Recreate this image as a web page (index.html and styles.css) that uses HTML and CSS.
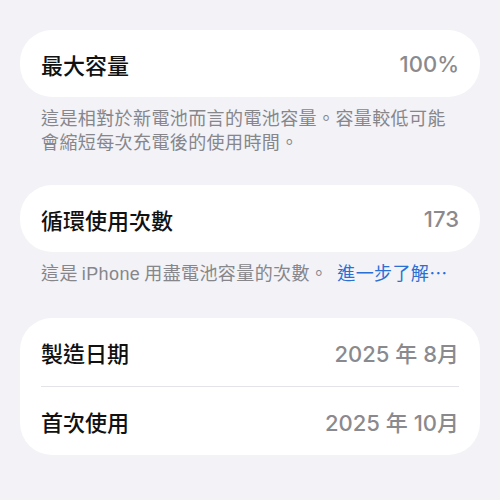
FILE: index.html
```html
<!DOCTYPE html>
<html lang="zh-Hant">
<head>
  <meta charset="UTF-8" />
  <meta name="viewport" content="width=device-width, initial-scale=1" />
  <title>電池健康度</title>
  <link rel="stylesheet" href="styles.css">
</head>
<body>

  <div class="group">
    <div class="row">
      <span class="label">最大容量</span>
      <span class="value">100%</span>
    </div>
  </div>
  <p class="note">這是相對於新電池而言的電池容量。容量較低可能會縮短每次充電後的使用時間。</p>

  <div class="group">
    <div class="row">
      <span class="label">循環使用次數</span>
      <span class="value">173</span>
    </div>
  </div>
  <p class="note last">這是<span class="latin">iPhone</span>用盡電池容量的次數。<a class="more" href="#">進一步了解⋯</a></p>

  <div class="group">
    <div class="row tall">
      <span class="label">製造日期</span>
      <span class="value">2025 年 8月</span>
    </div>
    <div class="row tall">
      <span class="label">首次使用</span>
      <span class="value">2025 年 10月</span>
    </div>
  </div>

</body>
</html>
```

FILE: styles.css
```css
body {
  margin: 0;
  padding: 30px 20px 0;
  min-height: 100vh;
  box-sizing: border-box;
  background-color: #f2f2f7;
  font-family: "Liberation Sans", "Noto Sans CJK TC", sans-serif;
  color: #111;
}

.group {
  background-color: #fff;
  border-radius: 32px;
  padding: 0 21px;
}

.row {
  height: 67px;
  display: flex;
  align-items: center;
  justify-content: space-between;
  font-size: 22px;
}

.row.tall {
  height: 68px;
}

.row + .row {
  border-top: 1px solid #e3e3e8;
}

.label {
  font-weight: 500;
  color: #111;
}

.value {
  font-family: "Inter", "Noto Sans CJK TC", sans-serif;
  font-weight: 500;
  color: #8a8a8e;
}

.note {
  margin: 10px 21px 30px;
  font-size: 18px;
  line-height: 24px;
  letter-spacing: 0.4px;
  color: #86868b;
}

.note.last {
  margin-bottom: 32px;
}

.note .latin {
  margin: 0 4px;
}

.more {
  color: #2a6fd4;
  text-decoration: none;
  margin-left: 9px;
}
```
